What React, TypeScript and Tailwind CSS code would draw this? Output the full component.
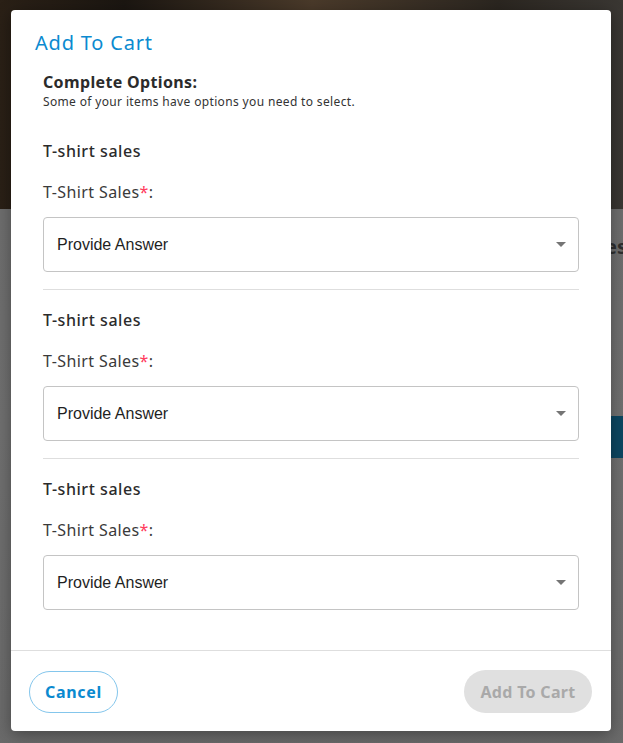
import React from 'react';

const sections = [
  { title: 'T-shirt sales', label: 'T-Shirt Sales' },
  { title: 'T-shirt sales', label: 'T-Shirt Sales' },
  { title: 'T-shirt sales', label: 'T-Shirt Sales' },
];

const SelectBox: React.FC = () => (
  <div className="flex h-[55px] items-center justify-between rounded-[4px] border border-[#c4c4c4] bg-white pl-[13px] pr-[12px]">
    <span className="font-['Liberation_Sans',Arial,sans-serif] text-[16px] text-[#1f1f1f]">
      Provide Answer
    </span>
    <svg width="10" height="5" viewBox="0 0 10 5" aria-hidden>
      <path d="M0 0h10L5 5z" fill="#757575" />
    </svg>
  </div>
);

export default function App() {
  return (
    <div className="relative h-[743px] w-[623px] overflow-hidden bg-[#6c6c6c] font-['Noto_Sans',sans-serif]">
      {/* page behind the overlay */}
      <div className="h-[209px] bg-[linear-gradient(90deg,#2a2016_0%,#1b1611_20%,#4a3a2a_50%,#2b2620_80%,#3a3733_100%)]" />
      <div className="bg-[linear-gradient(180deg,#6e6e6e_0%,#707070_40%,#6a6a6a_100%)]">
        <div className="flex justify-end overflow-hidden pt-[23px]">
          <span className="-mr-[4px] text-[20px] font-bold text-[#2e2e2e]">Sales</span>
        </div>
        <div className="mt-[154px] flex justify-end">
          <div className="flex h-[42px] w-[120px] items-center bg-[#0c4661] pl-[39px] text-[14px] font-semibold text-[#6d8a98]">
            A
          </div>
        </div>
        <div className="h-[300px]" />
      </div>

      {/* modal */}
      <div className="absolute left-[11px] top-[10px] flex h-[721px] w-[600px] flex-col rounded-[4px] bg-white shadow-[0_4px_16px_rgba(0,0,0,0.35)]">
        <div className="px-[24px] pt-[20px]">
          <h2 className="text-[20px] leading-[26px] tracking-[0.8px] text-[#0b8ad0]">Add To Cart</h2>
        </div>

        <div className="flex-1 px-[32px]">
          <div className="mt-[15px] text-[16px] font-bold leading-[22px] tracking-[0.35px] text-[#2b2b2b]">
            Complete Options:
          </div>
          <div className="mt-[1px] text-[12px] leading-[16px] tracking-[0.35px] text-[#333]">
            Some of your items have options you need to select.
          </div>

          <div className="mt-[30px]">
            {sections.map((s, i) => (
              <div
                key={i}
                className={
                  i < sections.length - 1
                    ? 'border-b border-[#dedede] pb-[17px]'
                    : ''
                }
              >
                <div className={i > 0 ? 'pt-[19px]' : ''}>
                  <div className="text-[16px] font-medium leading-[22px] tracking-[0.55px] text-[#2b2b2b]">
                    {s.title}
                  </div>
                  <div className="mt-[19px] text-[16px] leading-[22px] tracking-[0.4px] text-[#3a3a3a]">
                    {s.label}
                    <span className="text-[#ff3b5c]">*</span>:
                  </div>
                  <div className="mt-[14px]">
                    <SelectBox />
                  </div>
                </div>
              </div>
            ))}
          </div>
        </div>

        <div className="flex items-center justify-between border-t border-[#dedede] pb-[18px] pl-[18px] pr-[19px] pt-[19px]">
          <button className="h-[42px] w-[89px] rounded-full border border-[#84c6ec] text-[16px] font-bold tracking-[0.7px] text-[#0b8ad0]">
            Cancel
          </button>
          <button className="h-[43px] w-[128px] rounded-full bg-[#e0e0e0] text-[16px] font-bold tracking-[0.3px] text-[#a9a9a9]">
            Add To Cart
          </button>
        </div>
      </div>
    </div>
  );
}
